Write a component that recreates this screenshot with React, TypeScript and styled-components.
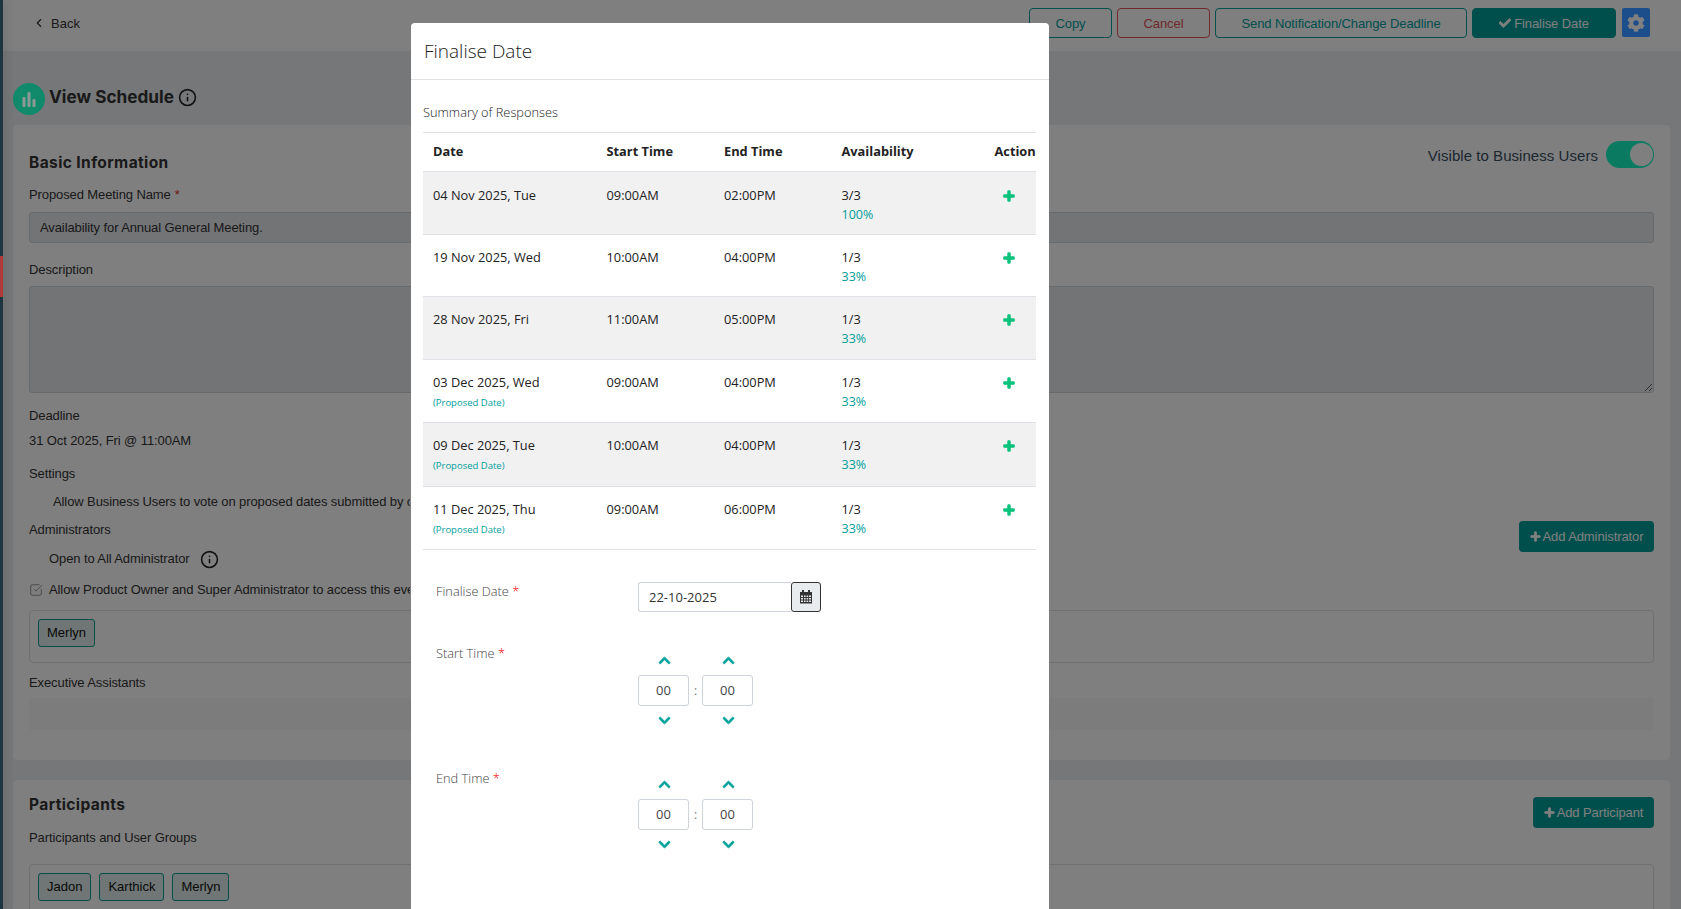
import React from "react";
import styled, { createGlobalStyle } from "styled-components";
import { ChevronLeft, Info, SquareCheckBig } from "lucide-react";
import { FaCheck, FaPlus, FaCog, FaChevronUp, FaChevronDown } from "react-icons/fa";

const Global = createGlobalStyle`
  html, body { margin: 0; padding: 0; height: 909px; overflow: hidden; background: #eceef1; }
  #root { height: 909px; overflow: hidden; }
  * { box-sizing: border-box; }
`;

const Shell = styled.div`
  display: flex;
  height: 909px;
  font-family: "Liberation Sans", Arial, sans-serif;
  font-size: 13px;
  color: #333;
  overflow: hidden;
`;
const Sidebar = styled.aside`
  flex: 0 0 3px;
  background: #1c3540;
  padding-top: 256px;
  box-shadow: 2px 0 8px rgba(0, 0, 0, 0.22);
  position: relative;
  z-index: 6;
`;
const ActiveMark = styled.div`
  height: 41px;
  background: #b03a3a;
`;
const Main = styled.main`
  flex: 1;
  min-width: 0;
`;
const TopBar = styled.header`
  height: 51px;
  background: #fff;
  display: flex;
  align-items: flex-start;
  padding: 8px 31px 0 29px;
  gap: 5px;
`;
const Back = styled.div`
  display: flex;
  align-items: center;
  gap: 5px;
  height: 30px;
  margin-right: auto;
  font-size: 13px;
`;
const BarBtn = styled.button<{ $w: number; $tone: "teal" | "red" | "solid" }>`
  width: ${(p) => p.$w}px;
  height: 30px;
  border-radius: 4px;
  font: 13px "Liberation Sans", Arial, sans-serif;
  letter-spacing: -0.1px;
  padding: 0;
  display: flex;
  align-items: center;
  justify-content: center;
  gap: 3px;
  border: 1px solid ${(p) => (p.$tone === "red" ? "#e0525a" : "#009e9b")};
  color: ${(p) => (p.$tone === "red" ? "#e0525a" : p.$tone === "solid" ? "#fff" : "#009e9b")};
  background: ${(p) => (p.$tone === "solid" ? "#009e9b" : "#fff")};
  svg { width: 12px; height: 12px; stroke: currentColor; stroke-width: 30; }
`;
const Gear = styled.button`
  width: 28px;
  height: 29px;
  margin-left: 1px;
  border: 0;
  border-radius: 2px;
  background: #1d4e8c;
  color: #808080;
  padding: 0;
  display: flex;
  align-items: center;
  justify-content: center;
  position: relative;
  z-index: 6;
  svg { width: 18px; height: 18px; }
`;
const TitleRow = styled.div`
  height: 74px;
  padding: 32px 0 0 10px;
  display: flex;
  align-items: flex-start;
`;
const TitleCircle = styled.div`
  width: 32px;
  height: 32px;
  border-radius: 50%;
  background: #118a6c;
  margin-right: 4px;
  display: flex;
  align-items: center;
  justify-content: center;
  position: relative;
  z-index: 6;
`;
const PageTitle = styled.h1`
  margin: 0 4px 0 0;
  font: 700 17.2px/28px Inter, "Liberation Sans", sans-serif;
  color: #333;
`;
const TitleInfo = styled.span`
  margin-top: 5px;
  display: flex;
`;
const Card = styled.section<{ $h?: number; $mt?: number }>`
  margin: ${(p) => p.$mt ?? 0}px 11px 0 10px;
  height: ${(p) => (p.$h ? `${p.$h}px` : "auto")};
  background: #fff;
  border-radius: 4px;
  padding: 16px 16px 0;
`;
const HeadRow = styled.div<{ $h: number }>`
  height: ${(p) => p.$h}px;
  display: flex;
  justify-content: space-between;
  align-items: flex-start;
`;
const SectionTitle = styled.h2<{ $mt: number }>`
  margin: ${(p) => p.$mt}px 0 0;
  font: 700 15.5px/18px Inter, "Liberation Sans", sans-serif;
  letter-spacing: 0.4px;
  color: #333;
`;
const VisibleWrap = styled.div`
  display: flex;
  align-items: center;
  gap: 8px;
  font-size: 15px;
  letter-spacing: 0.05px;
  color: #384e60;
`;
const VisibleText = styled.span`
  padding-top: 2px;
`;
const Toggle = styled.div`
  width: 48px;
  height: 27px;
  border-radius: 14px;
  background: #14f4c0;
  padding: 2px 1px 2px 0;
  display: flex;
  justify-content: flex-end;
`;
const Knob = styled.div`
  width: 23px;
  height: 23px;
  border-radius: 50%;
  background: #fff;
`;
const Label = styled.div<{ $mt?: number; $ml?: number; $clip?: number }>`
  height: 20px;
  line-height: 20px;
  margin-top: ${(p) => p.$mt ?? 0}px;
  margin-left: ${(p) => p.$ml ?? 0}px;
  white-space: nowrap;
  letter-spacing: -0.1px;
  display: flex;
  align-items: center;
  ${(p) => (p.$clip ? `width: ${p.$clip}px; overflow: hidden;` : "")}
`;
const Req = styled.span`
  color: #e03030;
  margin-left: 4px;
`;
const TextBox = styled.input`
  display: block;
  width: 100%;
  height: 31px;
  margin-top: 7px;
  padding: 0 10px;
  font: 13px "Liberation Sans", Arial, sans-serif;
  letter-spacing: -0.1px;
  color: #333;
  background: #e6e8ec;
  border: 1px solid #ced4da;
  border-radius: 3px;
  outline: none;
`;
const Area = styled.textarea`
  display: block;
  width: 100%;
  height: 107px;
  margin-top: 6px;
  background: #e6e8ec;
  border: 1px solid #ced4da;
  border-radius: 3px;
  resize: vertical;
  outline: none;
`;
const AdminRow = styled.div`
  height: 20px;
  margin-top: 8px;
  display: flex;
  justify-content: space-between;
  align-items: flex-start;
`;
const AddBtn = styled.button<{ $w: number }>`
  flex: none;
  width: ${(p) => p.$w}px;
  height: 31px;
  margin-top: 1px;
  border: 0;
  border-radius: 4px;
  background: #009e9b;
  color: #fff;
  padding: 0;
  font: 13px "Liberation Sans", Arial, sans-serif;
  letter-spacing: -0.1px;
  display: flex;
  align-items: center;
  justify-content: center;
  gap: 2px;
  svg { width: 11px; height: 11px; stroke: currentColor; stroke-width: 40; }
`;
const ChipBox = styled.div<{ $h: number; $mt: number }>`
  height: ${(p) => p.$h}px;
  margin-top: ${(p) => p.$mt}px;
  border: 1px solid #e0e0e0;
  border-radius: 4px;
  padding: 8px;
  display: flex;
  gap: 8px;
  align-items: flex-start;
`;
const Chip = styled.div`
  height: 28px;
  line-height: 26px;
  padding: 0 8px;
  background: #deedea;
  border: 1px solid #0a9a90;
  border-radius: 3px;
  color: #111;
`;
const EmptyBox = styled.div`
  height: 32px;
  margin-top: 5px;
  background: #f8f8f8;
  border-radius: 3px;
`;

const Backdrop = styled.div`
  position: fixed;
  inset: 0;
  background: rgba(0, 0, 0, 0.5);
  z-index: 5;
  padding: 23px 0 0 411px;
`;
const Modal = styled.div`
  width: 638px;
  height: 1100px;
  background: #fff;
  border-radius: 4px 4px 0 0;
  font-family: "Open Sans", sans-serif;
  color: #333;
`;
const ModalHead = styled.div`
  height: 57px;
  padding: 0 13px;
  border-bottom: 1px solid #dee2e6;
  display: flex;
  align-items: center;
  font-size: 19px;
  font-weight: 300;
  color: #222;
`;
const ModalBody = styled.div`
  padding: 0 13px 0 12px;
`;
const Summary = styled.div`
  height: 53px;
  line-height: 65px;
  font-size: 12.8px;
  font-weight: 300;
  color: #222;
  border-bottom: 1px solid #dee2e6;
`;
const cols = "173.5px 117.5px 117.5px 153px 52px";
const HeadCells = styled.div`
  display: grid;
  grid-template-columns: ${cols};
  height: 39px;
  padding-bottom: 2px;
  align-items: center;
  font-size: 12.8px;
  font-weight: 700;
  color: #222;
  border-bottom: 1px solid #dee2e6;
`;
const HeadCell = styled.div`
  padding-left: 10px;
  white-space: nowrap;
`;
const Row = styled.div<{ $h: number; $alt: boolean }>`
  display: grid;
  grid-template-columns: ${cols};
  height: ${(p) => p.$h}px;
  background: ${(p) => (p.$alt ? "#f1f1f1" : "#fff")};
  border-bottom: 1px solid #dee2e6;
  font-size: 12.8px;
  color: #222;
`;
const Cell = styled.div<{ $pt: number }>`
  padding: ${(p) => p.$pt}px 0 0 10px;
  line-height: 19px;
  white-space: nowrap;
`;
const Proposed = styled.div`
  font-size: 9.5px;
  line-height: 22px;
  color: #009e9b;
`;
const Pct = styled.div`
  color: #009e9b;
  font-size: 12.5px;
`;
const PlusCell = styled.div<{ $pt: number }>`
  padding: ${(p) => p.$pt + 4}px 0 0 18px;
  color: #0cc27c;
  svg { width: 12px; height: 12px; display: block; stroke: currentColor; stroke-width: 50; }
`;
const FormRow = styled.div<{ $h: number }>`
  height: ${(p) => p.$h}px;
  display: flex;
  padding-left: 13px;
`;
const FormLabel = styled.div<{ $mt: number }>`
  width: 202px;
  margin-top: ${(p) => p.$mt}px;
  line-height: 20px;
  font-size: 12.8px;
  color: #444;
  font-weight: 300;
`;
const Star = styled.span`
  color: #f00;
`;
const DateWrap = styled.div`
  display: flex;
  margin-top: 32px;
  height: 30px;
`;
const DateInput = styled.div`
  width: 153px;
  height: 30px;
  border: 1px solid #ced4da;
  border-right: 0;
  border-radius: 3px 0 0 3px;
  padding-left: 10px;
  line-height: 28px;
  font-size: 13px;
  color: #333;
`;
const CalBtn = styled.div`
  width: 30px;
  height: 30px;
  border: 1px solid #333;
  border-radius: 3px;
  background: #e9ecef;
  display: flex;
  align-items: center;
  justify-content: center;
`;
const SpinnerWrap = styled.div<{ $mt: number }>`
  margin-top: ${(p) => p.$mt}px;
`;
const Spinner = styled.div`
  display: grid;
  grid-template-columns: 51px 13px 51px;
  grid-template-rows: 29px 31px 29px;
  justify-items: center;
  align-items: center;
`;
const Arrow = styled.div`
  color: #00a29b;
  display: flex;
  padding-left: 2px;
  svg { width: 13px; height: 13px; stroke: currentColor; stroke-width: 30; }
`;
const TimeBox = styled.div`
  width: 51px;
  height: 31px;
  border: 1px solid #ced4da;
  border-radius: 3px;
  text-align: center;
  line-height: 29px;
  font-size: 13px;
  color: #444;
`;
const Colon = styled.div`
  font-size: 12px;
  color: #777;
`;

const rows = [
  { d: "04 Nov 2025, Tue", s: "09:00AM", e: "02:00PM", a: "3/3", p: "100%", h: 63, pt: 14, prop: false },
  { d: "19 Nov 2025, Wed", s: "10:00AM", e: "04:00PM", a: "1/3", p: "33%", h: 62, pt: 13, prop: false },
  { d: "28 Nov 2025, Fri", s: "11:00AM", e: "05:00PM", a: "1/3", p: "33%", h: 63, pt: 13, prop: false },
  { d: "03 Dec 2025, Wed", s: "09:00AM", e: "04:00PM", a: "1/3", p: "33%", h: 63, pt: 13, prop: true },
  { d: "09 Dec 2025, Tue", s: "10:00AM", e: "04:00PM", a: "1/3", p: "33%", h: 64, pt: 13, prop: true },
  { d: "11 Dec 2025, Thu", s: "09:00AM", e: "06:00PM", a: "1/3", p: "33%", h: 63, pt: 13, prop: true },
];

const Calendar = () => (
  <svg width="14" height="14" viewBox="0 0 14 14" fill="#333">
    <rect x="3" y="0" width="2" height="3" />
    <rect x="9" y="0" width="2" height="3" />
    <path d="M1 2h12v11.5H1z M2 5.5v1.5h2V5.5z M5 5.5v1.5h1.6V5.5z M7.6 5.5v1.5h1.6V5.5z M10.1 5.5v1.5H12V5.5z M2 8v1.5h2V8z M5 8v1.5h1.6V8z M7.6 8v1.5h1.6V8z M10.1 8v1.5H12V8z M2 10.5V12h2v-1.5z M5 10.5V12h1.6v-1.5z M7.6 10.5V12h1.6v-1.5z M10.1 10.5V12H12v-1.5z" fillRule="evenodd" />
  </svg>
);

const TimeSpinner = () => (
  <Spinner>
    <Arrow><FaChevronUp /></Arrow>
    <span />
    <Arrow><FaChevronUp /></Arrow>
    <TimeBox>00</TimeBox>
    <Colon>:</Colon>
    <TimeBox>00</TimeBox>
    <Arrow><FaChevronDown /></Arrow>
    <span />
    <Arrow><FaChevronDown /></Arrow>
  </Spinner>
);

export default function App() {
  return (
    <>
      <Global />
      <Shell>
        <Sidebar><ActiveMark /></Sidebar>
        <Main>
          <TopBar>
            <Back><ChevronLeft size={14} strokeWidth={2} />Back</Back>
            <BarBtn $w={83} $tone="teal">Copy</BarBtn>
            <BarBtn $w={93} $tone="red">Cancel</BarBtn>
            <BarBtn $w={252} $tone="teal">Send Notification/Change Deadline</BarBtn>
            <BarBtn $w={144} $tone="solid"><FaCheck />Finalise Date</BarBtn>
            <Gear><FaCog /></Gear>
          </TopBar>
          <TitleRow>
            <TitleCircle>
              <svg width="18" height="18" viewBox="0 0 18 18" fill="#8c9a96">
                <rect x="2.5" y="7" width="3" height="10" rx="1" />
                <rect x="7.5" y="2" width="3" height="15" rx="1" />
                <rect x="12.5" y="9" width="3" height="8" rx="1" />
              </svg>
            </TitleCircle>
            <PageTitle>View Schedule</PageTitle>
            <TitleInfo><Info size={19} strokeWidth={2} color="#222" /></TitleInfo>
          </TitleRow>
          <Card $h={635}>
            <HeadRow $h={44}>
              <SectionTitle $mt={13}>Basic Information</SectionTitle>
              <VisibleWrap><VisibleText>Visible to Business Users</VisibleText><Toggle><Knob /></Toggle></VisibleWrap>
            </HeadRow>
            <Label>Proposed Meeting Name<Req>*</Req></Label>
            <TextBox readOnly value="Availability for Annual General Meeting." />
            <Label $mt={17}>Description</Label>
            <Area readOnly />
            <Label $mt={13}>Deadline</Label>
            <Label $mt={5}>31 Oct 2025, Fri @ 11:00AM</Label>
            <Label $mt={13}>Settings</Label>
            <Label $mt={8} $ml={24} $clip={357}>Allow Business Users to vote on proposed dates submitted by other participants</Label>
            <AdminRow>
              <Label>Administrators</Label>
              <AddBtn $w={135}><FaPlus />Add Administrator</AddBtn>
            </AdminRow>
            <Label $mt={9} $ml={20}>Open to All Administrator<Info size={19} strokeWidth={2} color="#222" style={{ marginLeft: 10 }} /></Label>
            <Label $mt={11} $clip={381}>
              <SquareCheckBig size={14} strokeWidth={1.5} color="#8c8c8c" style={{ marginRight: 6, flex: "none" }} />
              Allow Product Owner and Super Administrator to access this event
            </Label>
            <ChipBox $h={53} $mt={10}><Chip>Merlyn</Chip></ChipBox>
            <Label $mt={10}>Executive Assistants</Label>
            <EmptyBox />
          </Card>
          <Card $mt={20} $h={200}>
            <HeadRow $h={32}>
              <SectionTitle $mt={0}>Participants</SectionTitle>
              <AddBtn $w={121}><FaPlus />Add Participant</AddBtn>
            </HeadRow>
            <Label>Participants and User Groups</Label>
            <ChipBox $h={80} $mt={16}>
              <Chip>Jadon</Chip>
              <Chip>Karthick</Chip>
              <Chip>Merlyn</Chip>
            </ChipBox>
          </Card>
        </Main>
      </Shell>
      <Backdrop>
        <Modal>
          <ModalHead>Finalise Date</ModalHead>
          <ModalBody>
            <Summary>Summary of Responses</Summary>
            <HeadCells>
              <HeadCell>Date</HeadCell>
              <HeadCell>Start Time</HeadCell>
              <HeadCell>End Time</HeadCell>
              <HeadCell>Availability</HeadCell>
              <HeadCell>Action</HeadCell>
            </HeadCells>
            {rows.map((r, i) => (
              <Row key={r.d} $h={r.h} $alt={i % 2 === 0}>
                <Cell $pt={r.pt}>
                  {r.d}
                  {r.prop && <Proposed>(Proposed Date)</Proposed>}
                </Cell>
                <Cell $pt={r.pt}>{r.s}</Cell>
                <Cell $pt={r.pt}>{r.e}</Cell>
                <Cell $pt={r.pt}>
                  {r.a}
                  <Pct>{r.p}</Pct>
                </Cell>
                <PlusCell $pt={r.pt}><FaPlus /></PlusCell>
              </Row>
            ))}
            <FormRow $h={62}>
              <FormLabel $mt={31}>Finalise Date <Star>*</Star></FormLabel>
              <DateWrap>
                <DateInput>22-10-2025</DateInput>
                <CalBtn><Calendar /></CalBtn>
              </DateWrap>
            </FormRow>
            <FormRow $h={125}>
              <FormLabel $mt={31}>Start Time <Star>*</Star></FormLabel>
              <SpinnerWrap $mt={34}><TimeSpinner /></SpinnerWrap>
            </FormRow>
            <FormRow $h={125}>
              <FormLabel $mt={31}>End Time <Star>*</Star></FormLabel>
              <SpinnerWrap $mt={33}><TimeSpinner /></SpinnerWrap>
            </FormRow>
          </ModalBody>
        </Modal>
      </Backdrop>
    </>
  );
}
